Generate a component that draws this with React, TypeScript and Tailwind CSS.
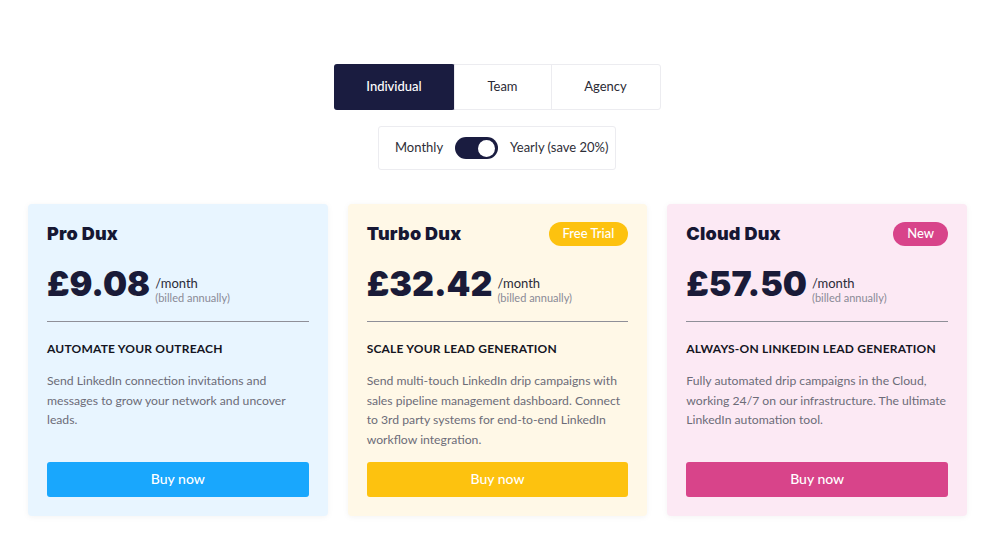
import React, { useState } from 'react';

type Plan = {
  name: string;
  price: string;
  badge?: string;
  heading: string;
  description: string;
  cardBg: string;
  buttonBg: string;
  badgeBg: string;
};

const plans: Plan[] = [
  {
    name: 'Pro Dux',
    price: '£9.08',
    heading: 'Automate your outreach',
    description: 'Send LinkedIn connection invitations and messages to grow your network and uncover leads.',
    cardBg: 'bg-[#e8f5ff]',
    buttonBg: 'bg-[#19a7fd]',
    badgeBg: '',
  },
  {
    name: 'Turbo Dux',
    price: '£32.42',
    badge: 'Free Trial',
    heading: 'Scale your lead generation',
    description:
      'Send multi-touch LinkedIn drip campaigns with sales pipeline management dashboard. Connect to 3rd party systems for end-to-end LinkedIn workflow integration.',
    cardBg: 'bg-[#fff8e7]',
    buttonBg: 'bg-[#fdc20f]',
    badgeBg: 'bg-[#fdc20f]',
  },
  {
    name: 'Cloud Dux',
    price: '£57.50',
    badge: 'New',
    heading: 'Always-on LinkedIn lead generation',
    description:
      'Fully automated drip campaigns in the Cloud, working 24/7 on our infrastructure. The ultimate LinkedIn automation tool.',
    cardBg: 'bg-[#fce9f4]',
    buttonBg: 'bg-[#d8448a]',
    badgeBg: 'bg-[#d8448a]',
  },
];

const tabs = ['Individual', 'Team', 'Agency'];
const tabWidths: Record<string, string> = {
  Individual: 'w-[121px]',
  Team: 'w-[97px]',
  Agency: 'w-[109px]',
};

const App: React.FC = () => {
  const [tab, setTab] = useState('Individual');
  const [yearly, setYearly] = useState(true);

  return (
    <div className="h-[536px] overflow-hidden bg-white pt-16 font-['Lato','Noto_Sans',sans-serif] text-[#1c1c2b]">
      <div className="flex justify-center pr-[6px]">
        <div className="flex h-[46px] rounded-[3px] border border-[#ececf0] bg-white">
          {tabs.map((t, i) => (
            <button
              key={t}
              onClick={() => setTab(t)}
              className={`${tabWidths[t]} flex items-center justify-center text-[13px] ${
                tab === t
                  ? '-m-px h-[46px] rounded-[3px] bg-[#1a1c40] font-medium text-white'
                  : 'text-[#2a2a35]'
              } ${i > 0 ? 'border-l border-[#ececf0]' : ''}`}
            >
              {t}
            </button>
          ))}
        </div>
      </div>

      <div className="mt-4 flex justify-center pr-[6px]">
        <div className="flex h-[44px] w-[238px] items-center gap-3 rounded-[3px] border border-[#ececf0] pl-4 text-[13px] text-[#2e2e38]">
          <span>Monthly</span>
          <button
            onClick={() => setYearly(!yearly)}
            className={`flex h-[22px] w-[43px] items-center rounded-full bg-[#1a1c40] px-[3px] ${
              yearly ? 'justify-end' : 'justify-start'
            }`}
          >
            <span className="h-[17px] w-[17px] rounded-full bg-white" />
          </button>
          <span>Yearly (save 20%)</span>
        </div>
      </div>

      <div className="ml-7 mt-[34px] grid w-[939px] grid-cols-3 gap-5">
        {plans.map((p) => (
          <div
            key={p.name}
            className={`${p.cardBg} flex flex-col rounded-[4px] px-[19px] pb-[19px] pt-[18px] shadow-[0_1px_6px_rgba(0,0,0,0.05)]`}
          >
            <div className="flex h-6 items-center justify-between">
              <h3 className="font-['Inter',sans-serif] text-[18px] font-black leading-6 tracking-[0.2px] text-[#161733]">
                {p.name}
              </h3>
              {p.badge && (
                <span
                  className={`${p.badgeBg} flex h-6 items-center rounded-full px-[14px] text-[13px] font-medium text-white`}
                >
                  {p.badge}
                </span>
              )}
            </div>

            <div className="mt-[18px] flex items-end gap-[5px]">
              <span className="font-['Inter',sans-serif] text-[34px] font-black leading-10 text-[#1a1b38]">
                {p.price}
              </span>
              <div className="-mb-px flex flex-col">
                <span className="text-[13px] leading-4 text-[#2b2b38]">/month</span>
                <span className="text-[11px] leading-[14px] text-[#8a8a96]">(billed annually)</span>
              </div>
            </div>

            <div className="mt-[17px] border-t border-[#8f8f98]" />

            <h4 className="mt-[19px] text-[12px] font-bold uppercase leading-4 tracking-[0.2px] text-[#15151f]">
              {p.heading}
            </h4>
            <p className="mt-[14px] flex-1 text-[12.2px] leading-[19.5px] text-[#6c6c78]">
              {p.description}
            </p>

            <button
              className={`${p.buttonBg} mt-[13px] flex h-[35px] w-full items-center justify-center rounded-[3px] pb-[3px] text-[14px] font-medium text-white`}
            >
              Buy now
            </button>
          </div>
        ))}
      </div>
    </div>
  );
};

export default App;
